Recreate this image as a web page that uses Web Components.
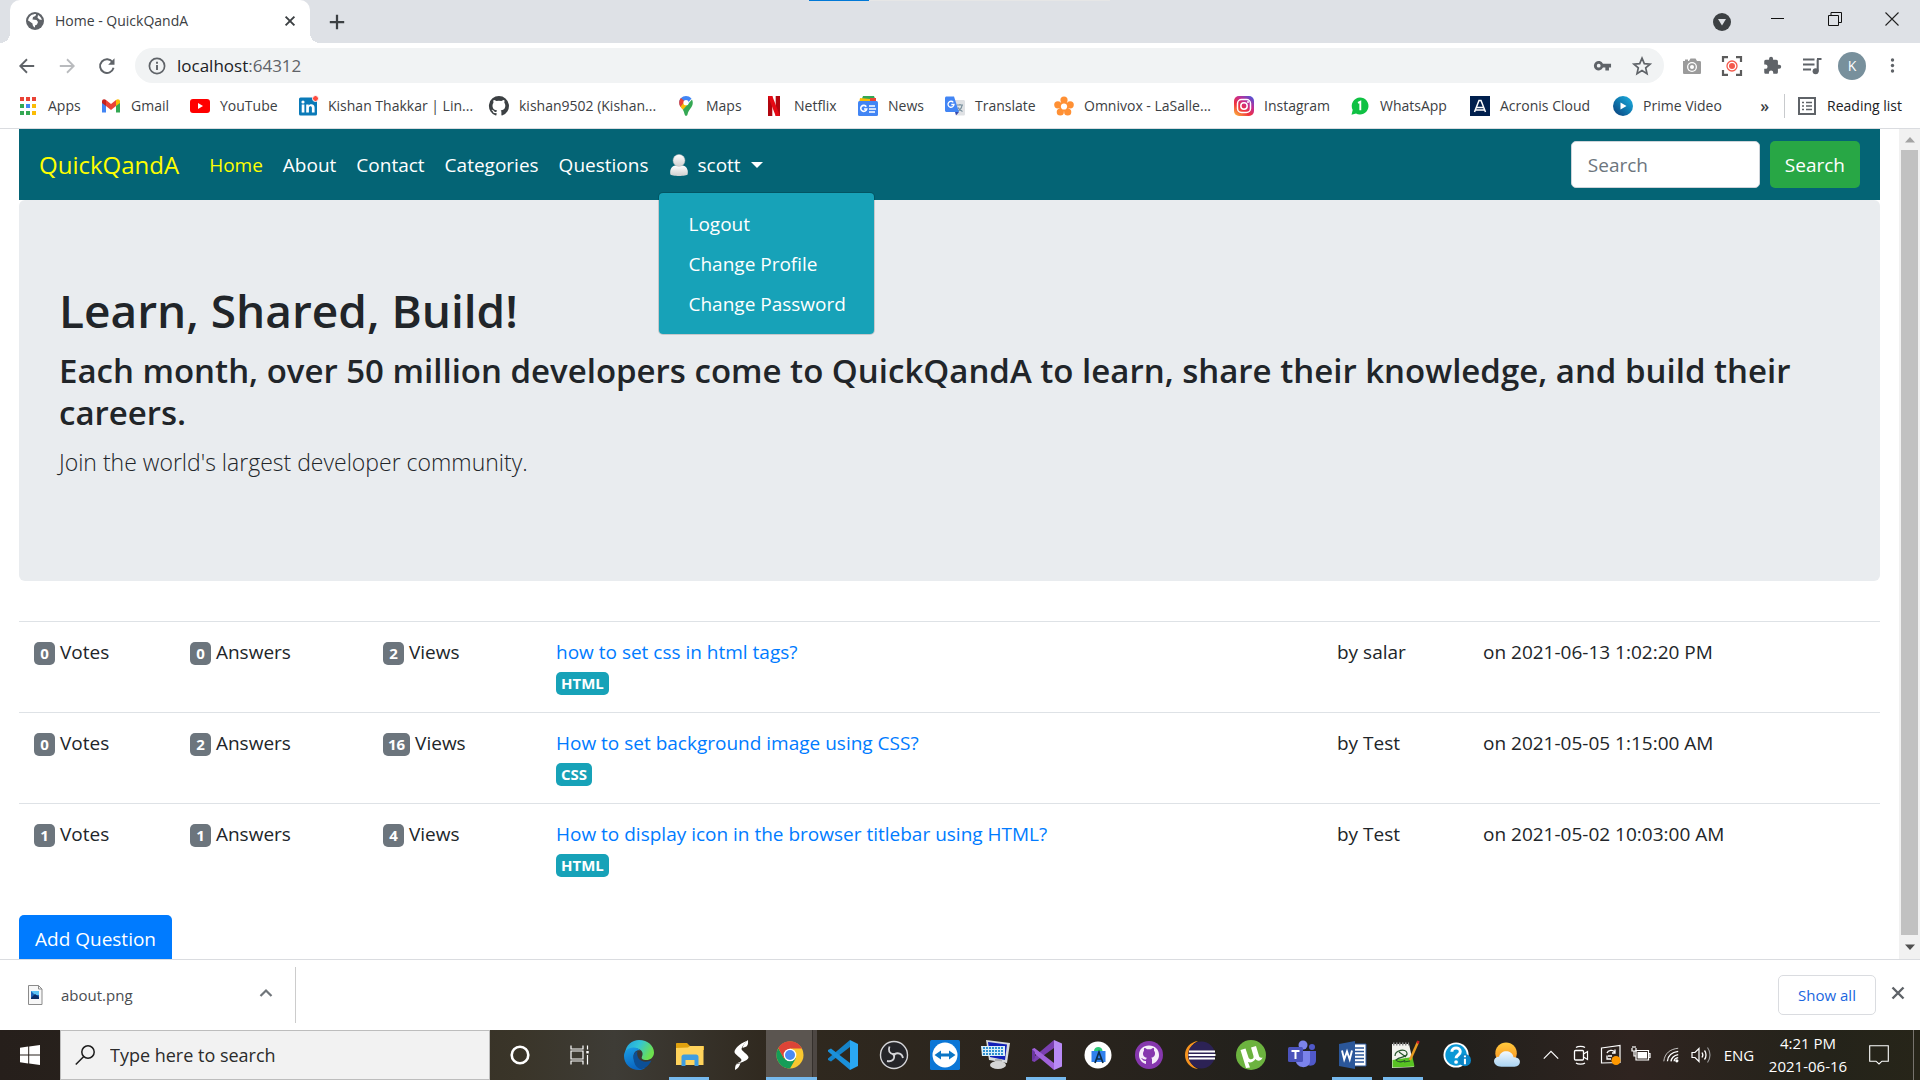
<!DOCTYPE html>
<html lang="en">
<head>
<meta charset="utf-8">
<title>Home - QuickQandA</title>
<style>
  html, body { margin: 0; height: 100%; }
  body { font-family: "Open Sans", "Noto Sans", "Liberation Sans", sans-serif; background: #fff; overflow: hidden; }
</style>
</head>
<body>
<app-window></app-window>
<script>
const BASE = `*{box-sizing:border-box} button{font:inherit;color:inherit;border:0;background:none;padding:0;margin:0;cursor:pointer} a{color:inherit;text-decoration:none}`;
function define(name, css, html, setup) {
  const t = document.createElement('template');
  t.innerHTML = `<style>${BASE}${css}</style>${html}`;
  customElements.define(name, class extends HTMLElement {
    constructor() {
      super();
      this.attachShadow({ mode: 'open' }).append(t.content.cloneNode(true));
    }
    connectedCallback() { if (setup) setup(this, this.shadowRoot); }
  });
}

/* name: [viewBox size, markup] */
const ICONS = {
  globe: [20, `<circle cx="10" cy="10" r="9" fill="#5f6368"/><path d="M3 9.5C4 5 7 3 11 3c0 2-1 2.500-3 3l-.5 2.500 4 .5 1.500 2-1 2.500-2 1v2c-1.500-.5-2.500-2-2.500-4L4 10zM13 4c2 1 3.500 3 3.800 5l-2.300-.5-2-1.800z" fill="#fff"/>`],
  x: [20, `<path d="M4.500 4.500l11 11M15.500 4.500l-11 11" stroke="currentColor" stroke-width="2.400" fill="none"/>`],
  plus: [20, `<path d="M10 2v16M2 10h16" stroke="currentColor" stroke-width="2.500" fill="none"/>`],
  back: [20, `<path d="M18 10H3M10 2.500L2.500 10l7.500 7.500" stroke="currentColor" stroke-width="2" fill="none"/>`],
  fwd: [20, `<path d="M2 10h15M10 2.500l7.500 7.500-7.500 7.500" stroke="currentColor" stroke-width="2" fill="none"/>`],
  reload: [20, `<path d="M16.300 6A7.600 7.600 0 1 0 17.300 12" stroke="currentColor" stroke-width="2.100" fill="none"/><path d="M18.300 1.500v7h-7z" fill="currentColor"/>`],
  info: [20, `<circle cx="10" cy="10" r="7.600" fill="none" stroke="currentColor" stroke-width="1.700"/><path d="M10 9v5M10 5.800v1.900" stroke="currentColor" stroke-width="1.900"/>`],
  key: [20, `<path fill-rule="evenodd" d="M10.500 8.200A5 5 0 1 0 10.500 12.200H13v3h3.800v-3H19v-4zM6 8.200a2 2 0 1 1 0 4 2 2 0 0 1 0-4z" fill="currentColor"/>`],
  star: [20, `<path d="M10 2.200l2.300 5.400 5.800.5-4.400 3.800 1.300 5.700L10 14.500l-5 3.100 1.300-5.700L1.900 8.100l5.800-.5z" stroke="currentColor" stroke-width="1.700" fill="none" stroke-linejoin="miter"/>`],
  camera: [20, `<path d="M1 5h2V3.500h3V5h1l1.500-2.500h5L15 5h2.500c1 0 1.500.5 1.500 1.500v10c0 1-.5 1.500-1.500 1.500h-15C1.500 18 1 17.500 1 16.500z" fill="#9b9b9b"/><circle cx="10" cy="11" r="5" fill="#fff"/><circle cx="10" cy="11" r="3.700" fill="#9b9b9b"/><circle cx="10" cy="11" r="2" fill="#fff"/>`],
  record: [20, `<path d="M1 6V1.200h5M14 1.200h5V6M19 14v4.800h-5M6 18.800H1V14" fill="none" stroke="#5c5c5c" stroke-width="2.200"/><circle cx="10" cy="10" r="5" fill="none" stroke="#f4594b" stroke-width="1.300"/><circle cx="10" cy="10" r="3" fill="#f4594b"/>`],
  puzzle: [20, `<path d="M17 9.200h-1.300V5.700c0-.9-.7-1.700-1.700-1.700h-3.400V2.900a2.100 2.100 0 0 0-4.200 0V4H3C2 4 1.300 4.800 1.300 5.700v3.200h1.200a2.300 2.300 0 0 1 0 4.600H1.300V17c0 .9.700 1.700 1.700 1.700h3.200v-1.200a2.300 2.300 0 0 1 4.600 0v1.200H14c.9 0 1.700-.8 1.700-1.700v-3.500H17a2.150 2.150 0 0 0 0-4.300z" fill="currentColor"/>`],
  media: [20, `<path d="M1 3.500h11.500M1 8.500h11.500M1 13.500h8M15.700 3.500v12M15 3h4.500" stroke="currentColor" stroke-width="2.100"/><circle cx="13.600" cy="15.200" r="3" fill="currentColor"/>`],
  dots: [20, `<g fill="currentColor"><circle cx="10" cy="3.500" r="2"/><circle cx="10" cy="10" r="2"/><circle cx="10" cy="16.500" r="2"/></g>`],
  dropdot: [20, `<circle cx="10" cy="10" r="9" fill="#3c4043"/><path d="M6 7h8l-4 6.500z" fill="#dee1e6"/>`],
  min: [14, `<path d="M0 6.500h13" stroke="#111" stroke-width="1"/>`],
  max: [14, `<path d="M.5 3.500h10v10H.5zM3 3V.5h10.500v10H11" stroke="#111" fill="none"/>`],
  close: [14, `<path d="M.5.5l13 13M13.500.5l-13 13" stroke="#222" stroke-width="1.100"/>`],
  apps: [20, `<g><path d="M2 1h4v4H2zM8 1h4v4H8zM14 1h4v4h-4z" fill="#ea4335"/><path d="M2 8h4v4H2zM2 15h4v4H2z" fill="#34a853"/><path d="M8 8h4v4H8z" fill="#4285f4"/><path d="M8 15h4v4H8z" fill="#34a853"/><path d="M14 8h4v4h-4zM14 15h4v4h-4z" fill="#fbbc05"/></g>`],
  gmail: [20, `<path d="M1 5v11.500h4V9z" fill="#4285f4"/><path d="M19 5v11.500h-4V9z" fill="#34a853"/><path d="M1 5.500C1 3 3.500 2.500 5 4v6L1 7z" fill="#c5221f"/><path d="M19 5.500C19 3 16.500 2.500 15 4v6l4-3z" fill="#fbbc04"/><path d="M5 4l5 4 5-4v6l-5 4-5-4z" fill="#ea4335"/>`],
  youtube: [20, `<rect y="3" width="20" height="14" rx="3" fill="#f00"/><path d="M8 7l5 3-5 3z" fill="#fff"/>`],
  linkedin: [20, `<rect x="1" y="1.500" width="18" height="18" rx="1.500" fill="#0a7ab8"/><circle cx="5" cy="6" r="1.600" fill="#fff"/><path d="M3.700 8.500h2.700v8H3.700zM8.200 8.500h2.500v1.200c1-2 5.900-2.200 5.900 2v4.800h-2.700v-4.300c0-2.600-3-2.300-3 0v4.300H8.200z" fill="#fff"/><circle cx="17.500" cy="2.500" r="3" fill="#ff4a3d" stroke="#fff"/>`],
  github: [20, `<path d="M10 0a10 10 0 0 0-3.200 19.500c.5.100.7-.2.700-.5v-1.900c-2.800.6-3.400-1.200-3.400-1.200-.4-1.100-1.100-1.500-1.100-1.500-.9-.6.100-.6.100-.6 1 .1 1.500 1 1.500 1 .9 1.500 2.400 1.100 2.900.9.100-.7.400-1.100.6-1.400-2.200-.2-4.600-1.100-4.600-4.900 0-1.100.4-2 1-2.700-.1-.2-.4-1.300.1-2.600 0 0 .9-.3 2.800 1a9.400 9.400 0 0 1 5 0c1.900-1.300 2.800-1 2.800-1 .5 1.300.2 2.400.1 2.600.6.700 1 1.600 1 2.700 0 3.800-2.400 4.700-4.600 4.900.4.300.7.900.7 1.900V19c0 .3.200.6.700.5A10 10 0 0 0 10 0z" fill="currentColor"/>`],
  maps: [20, `<path d="M10 0C6 0 3.200 3 3.200 6.500c0 3 1.800 4.500 3.500 6.800L15.500 2.500C14 .8 12 0 10 0z" fill="#4285f4"/><path d="M3.200 6.500c0-2 .8-3.300 1.700-4.500l4 3.500-4.300 5.500c-.9-1.300-1.400-2.700-1.400-4.500z" fill="#ea4335"/><path d="M4.500 10.800l4.200-5.200 4 2.400-5.600 6c-1-1.200-2-2.100-2.600-3.200z" fill="#fbbc04"/><path d="M16 3.500c1 2 1.300 4.800-.5 7.500-2 3-3.500 4.500-4 7.500-.2 1.800-2.500 2-3-.500-.3-1.500-.9-3-1.600-4.200z" fill="#34a853"/><circle cx="10" cy="6.700" r="2.600" fill="#fff"/>`],
  netflix: [20, `<path d="M4 0h4.300v20H4zM11.700 0H16v20h-4.300z" fill="#b1060f"/><path d="M4 0h4.300L16 20h-4.300z" fill="#e50914"/>`],
  news: [20, `<path d="M5 0h11l2 5H3z" fill="#34a853"/><path d="M2 2l10 1v4H1z" fill="#fbbc04"/><path d="M12 2h6v4h-6z" fill="#ea4335"/><rect y="5" width="20" height="15" rx="1.500" fill="#4285f4"/><path d="M8.300 10.800A3 3 0 1 0 8.700 13H6M11 10h6M11 13h7M11 16h6" stroke="#fff" stroke-width="1.600" fill="none"/>`],
  translate: [20, `<path d="M8 4h10.500c.8 0 1.500.6 1.500 1.500V18c0 1-.7 1.500-1.500 1.500H12z" fill="#dfe1e4"/><path d="M12 9h6M15 8v1.500M17 9.500c-.5 3-2.500 5-5 6M13 11.500c1 2 2.500 3 4.500 4" stroke="#78909c" stroke-width="1.200" fill="none"/><path d="M1.500.5H9L14 16H1.500C.7 16 0 15.300 0 14.500V2C0 1.100.7.500 1.500.5z" fill="#4285f4"/><path d="M10 16h4l-3 3.500z" fill="#3949ab"/><path d="M8.300 6.300A3 3 0 1 0 9 8.500H6.300" stroke="#fff" stroke-width="1.300" fill="none"/>`],
  flower: [20, `<g fill="#ff9034"><circle cx="10" cy="4" r="3.600"/><circle cx="3.800" cy="8.800" r="3.600"/><circle cx="16.200" cy="8.800" r="3.600"/><circle cx="6.300" cy="16" r="3.600"/><circle cx="13.700" cy="16" r="3.600"/><circle cx="10" cy="10.500" r="5"/></g><circle cx="10" cy="10.500" r="3.100" fill="#fff"/>`],
  instagram: [20, `<defs><linearGradient id="ig" x1="0" y1="1" x2=".8" y2="0"><stop offset="0" stop-color="#fdc33c"/><stop offset=".4" stop-color="#f0323c"/><stop offset=".7" stop-color="#c42d92"/><stop offset="1" stop-color="#5a4fd0"/></linearGradient></defs><rect width="20" height="20" rx="5" fill="url(#ig)"/><rect x="3.500" y="3.500" width="13" height="13" rx="4" fill="none" stroke="#fff" stroke-width="1.500"/><circle cx="10" cy="10" r="3.200" fill="none" stroke="#fff" stroke-width="1.500"/><circle cx="14" cy="6" r="1" fill="#fff"/>`],
  whatsapp: [20, `<path d="M10 1.500a8.500 8.500 0 1 1-4 16L1.500 18.700 2.700 14A8.500 8.500 0 0 1 10 1.500z" fill="#0fc143"/><path d="M8 6.800l2.300-1v8.500" fill="none" stroke="#fff" stroke-width="1.900"/>`],
  acronis: [20, `<path d="M0 0h20v20H0z" fill="#001f4d"/><path d="M4.500 16L9 4.500h2L15.500 16M6.500 11.500h7M5.500 14h9" fill="none" stroke="#fff" stroke-width="1.500"/>`],
  prime: [20, `<defs><linearGradient id="pv" x1="0" y1="1" x2="1" y2="0"><stop offset="0" stop-color="#0b3c78"/><stop offset=".5" stop-color="#0f79af"/><stop offset="1" stop-color="#1fb3e4"/></linearGradient></defs><circle cx="10" cy="10" r="10" fill="url(#pv)"/><path d="M7.500 6.500l6 3.500-6 3.500z" fill="#fff"/>`],
  list: [20, `<rect x="2" y="2" width="16" height="16" fill="none" stroke="#5f6368" stroke-width="2"/><path d="M5 6.500h2M9 6.500h6M5 10h2M9 10h6M5 13.500h2M9 13.500h6" stroke="#5f6368" stroke-width="1.600"/>`],
  user: [24, `<defs><linearGradient id="ug" x1="0" y1="0" x2="0" y2="1"><stop offset="0" stop-color="#fff"/><stop offset="1" stop-color="#cfcfcf"/></linearGradient></defs><path d="M2.500 22c-.8-6 2-9 5.500-9.500h8c3.500.5 6.300 3.500 5.500 9.500-1 2.500-18 2.500-19 0z" fill="url(#ug)"/><circle cx="12" cy="7" r="6.500" fill="url(#ug)" stroke="#bbb" stroke-width=".5"/>`],
  image: [20, `<path d="M3.500.500h10l3.500 3.500v15.500H3.500z" fill="#f7f7f7" stroke="#8b8b8b"/><path d="M13.500.500v3.500H17" fill="none" stroke="#8b8b8b"/><path d="M6 6h8v8H6z" fill="#1b62b8"/><path d="M6 6h8v4l-4 0z" fill="#5cc3f5"/><path d="M6 13l4-4 4 3v2H6z" fill="#0b2c66"/>`],
  up: [20, `<path d="M4.500 13L10 7.500l5.500 5.500" stroke="currentColor" stroke-width="2.200" fill="none"/>`],
  win: [20, `<path d="M0 2.800l8.200-1.200v8H0zM9.200 1.500L20 0v9.600H9.200zM0 10.500h8.200v8L0 17.300zM9.200 10.500H20V20L9.200 18.500z" fill="#fff"/>`],
  search: [20, `<circle cx="13" cy="7" r="6.200" fill="none" stroke="#1c1c1c" stroke-width="1.500"/><path d="M8.800 11.500L.8 19.500" stroke="#1c1c1c" stroke-width="1.500"/>`],
  cortana: [20, `<circle cx="10" cy="10" r="8.300" fill="none" stroke="#fff" stroke-width="2.600"/>`],
  taskview: [20, `<path d="M1 .5V4h12V.5M1 19.500V16h12v3.500M1 6h12v8H1zM17.500 .5v4M17.500 10v9.500" stroke="#fff" stroke-width="1.200" fill="none"/><path d="M16.300 6h2.400v2.400h-2.400z" fill="#fff"/>`],
  edge: [30, `<defs><linearGradient id="e1" x1="0" y1="0" x2="1" y2=".4"><stop offset="0" stop-color="#1f9de0"/><stop offset=".5" stop-color="#33c5d6"/><stop offset="1" stop-color="#6de04e"/></linearGradient><linearGradient id="e2" x1="0" y1="0" x2=".3" y2="1"><stop offset="0" stop-color="#1b9fe6"/><stop offset="1" stop-color="#0a66c2"/></linearGradient></defs><path d="M1 13C2 5 8 0 15 0c9 0 15 6 15 12.500 0 5-4 7.500-7.500 7.500-4 0-5.500-1.500-4.500-3.500 2-4-1-8-6-8S2 11 1 13z" fill="url(#e1)"/><path d="M0 16C0 11 4 7.500 9.500 7.500c3 0 5.500 1 7 3-4-1-7 2-7 6C9.500 23 15 28 21 28c-2 1.500-4 2-6 2C6.500 30 0 24 0 16z" fill="url(#e2)"/><path d="M9.500 17c0-3 1.500-5 4-6-2 8 5 13 14 9.500-3 6-7 8.500-11.500 8.500-4-1.500-6.500-6-6.500-12z" fill="#0c4f96"/>`],
  folder: [30, `<path d="M1 4c0-.6.400-1 1-1h10l3 3h13c.6 0 1 .4 1 1v3H1z" fill="#e0a10e"/><path d="M1 8l12-.5L15 6h13.500v19H1z" fill="#ffd35c"/><path d="M6.500 26V17c0-1.500 1-2.500 2.500-2.500h12c1.500 0 2.500 1 2.500 2.500v9h-4v-6h-9v6z" fill="#3f9de0"/>`],
  bolt: [30, `<path d="M20.500 1C13 4 8.500 9 8.500 12c0 2.500 7 6 7 8 0 1.500-3 3-6 3.500 7-.5 13-4 13-6 0-3-7-6.500-7-8.500 0-1.500 2-4 5-8z" fill="#fff"/><path d="M10 24.500c-1 2-1 4-1 5.500 3-1.500 4.500-3.500 5.500-7zM20.500 6.500c2-2 1.500-4 1.500-6.500-3 2-4.500 4.500-5.500 8z" fill="#fff"/>`],
  chrome: [30, `<circle cx="15" cy="15" r="13.500" fill="#f9c72f"/><path d="M3.300 8.200A13.500 13.500 0 0 0 15 28.500l5.800-10L15 15l-5.800 3.500z" fill="#159d58"/><path d="M15 8.500h12a13.500 13.500 0 0 0-23.700-.5l5.500 10.500z" fill="#dc4437"/><circle cx="15" cy="15" r="6.300" fill="#fff"/><circle cx="15" cy="15" r="5" fill="#4a8af4"/>`],
  vscode: [30, `<path d="M0 20l3 1.500L22 7V0L0 18.500z" fill="#1583c9"/><path d="M0 10l3-1.500L22 23v7L0 11.500z" fill="#1b90da"/><path d="M22 0l8 4v22l-8 4z" fill="#2aa8f4"/>`],
  obs: [30, `<circle cx="15" cy="15" r="13.500" fill="#252529" stroke="#d5d5d8" stroke-width="1.400"/><g fill="none" stroke="#d5d5d8" stroke-width="1.800"><path d="M15 14.500c-5-1-6-4-4.500-8M15 14.500c4-2.500 8-1 9 3.500M15 14.500c1 5-2 7.500-7 6.500"/></g><circle cx="15" cy="14.500" r="1.500" fill="#d5d5d8"/>`],
  teamviewer: [30, `<rect width="30" height="30" rx="1.500" fill="#0b76d6"/><circle cx="15" cy="15" r="12.500" fill="#fff"/><path d="M4.500 15l6.500-4.500v3h8v-3l6.500 4.500-6.500 4.500v-3h-8v3z" fill="#0b76c6"/>`],
  remote: [30, `<path d="M5 0l24 3-3 20L8 20z" fill="#d8dadd"/><path d="M7 2l19 2.500L24 20 9 17z" fill="#1220b8"/><path d="M0 6h24v10H1z" fill="#d9eef8"/><path d="M2 8h20M2 11h20M2 14h20" stroke="#3090d0" stroke-width="1.800" stroke-dasharray="2 1"/><path d="M14 19h7v5h-7z" fill="#b0b0b0"/><ellipse cx="17" cy="25" rx="8" ry="4" fill="#d5d5d5"/>`],
  vs: [30, `<path d="M0 21l2.500 1L22 8V0L0 18.500z" fill="#7a3fb0"/><path d="M0 9l2.500-1L22 23v7L0 11.500z" fill="#a163da"/><path d="M0 9l3 3v6l-3 3z" fill="#6a35a0"/><path d="M22 0l8 3.500v23L22 30z" fill="#b98af5"/>`],
  studio: [30, `<circle cx="15" cy="15" r="13.500" fill="#fff"/><path d="M8.500 11h14v11h-14z" fill="#2f80ed"/><path d="M11 11c0-5.500 8.500-5.500 8.500 0z" fill="#2ccb78"/><path d="M12 23l4-11 4 11M14 19h5" stroke="#0c2d4a" stroke-width="1.700" fill="none"/>`],
  ghdesk: [30, `<circle cx="15" cy="15" r="14" fill="#8637ae"/><path d="M15 5.500c-6 0-10 4-10 9.500 0 4.500 3 8 7 9v-3c-3 .5-4-2-5-3 2 0 2 2 5 1.500l.8-1.700C9.500 17 9 15 9 13.500c0-1.200.4-2 1-2.700-.2-1-.1-2 .2-2.800 1 0 2 .6 2.800 1.200h4c.8-.6 1.800-1.200 2.800-1.200.3.800.4 1.800.2 2.800.6.700 1 1.500 1 2.700 0 1.500-.5 3.500-3.800 4.300.5.500.8 1 .8 2V24c4-1 7-4.500 7-9 0-5.500-4-9.500-10-9.500z" fill="#f5edf9"/>`],
  eclipse: [30, `<path d="M13 1C5 2 0 8 0 15s5 13 13 14C7 26 4 21 4 15S7 4 13 1z" fill="#f7941e"/><circle cx="16.500" cy="15" r="13.500" fill="#2c2255"/><path d="M4 11.500h26M3.500 15h27M4 18.500h26" stroke="#fff" stroke-width="2"/>`],
  utorrent: [30, `<circle cx="15" cy="15" r="15" fill="#6cb33f"/><path d="M4.500 10l5-1.500 3 9c1 3 6 2 5-1.500L15 7.500l5-1.500 3 10c.5 1.500 1.500 2 3.500 1.500-.5 3-5 4.500-7 1.500-2 3-5 4-7.500 3l2 5.500-4 .5z" fill="#fff"/>`],
  teams: [30, `<circle cx="16" cy="5" r="4.500" fill="#7b83eb"/><circle cx="25" cy="7" r="3" fill="#5059c9"/><path d="M18 11h11v9c0 7-8 7-11 3z" fill="#5059c9"/><path d="M9 11h14v10c0 8-12 8-14 1z" fill="#7b83eb"/><rect x="1" y="7" width="15" height="15" rx="1.500" fill="#4b53bc"/><path d="M4.500 11h8M8.500 11v8" stroke="#fff" stroke-width="2"/>`],
  word: [30, `<path d="M14 4h14v22H14z" fill="#fff" stroke="#2b579a"/><path d="M17 8h9M17 11.500h9M17 15h9M17 18.500h9M17 22h9" stroke="#2b579a" stroke-width="1.600"/><path d="M1 4l16-3v28L1 26z" fill="#2b579a"/><path d="M4 10.500l2.200 9L9 11.500l2.700 8 2.300-9" stroke="#fff" stroke-width="1.900" fill="none"/>`],
  npp: [30, `<path d="M3 4h17l5 23-22 1z" fill="#f3f3ee"/><path d="M3.500 20l20-3 2 9.500-22 1z" fill="#58c322"/><path d="M4 4h16" stroke="#888" stroke-width="3" stroke-dasharray="1.500 1.500"/><path d="M6 16c0-6 11-8 12-3s-7 3-11 7c2 3 8 2 9 0M10 12l7 5M15 22l6-1" stroke="#26562a" stroke-width="1.200" fill="none"/><path d="M29 2l-8 18" stroke="#e69a21" stroke-width="2.500"/><path d="M29.500 1l-1 2.500" stroke="#c22" stroke-width="2.500"/>`],
  help: [30, `<circle cx="14" cy="15" r="13.500" fill="#fff"/><circle cx="14" cy="15" r="11.500" fill="#0a98d6"/><path d="M9.500 11.500c0-5.500 9-5.500 9 0 0 3.500-4.500 3.500-4.500 7" stroke="#fff" stroke-width="3.200" fill="none"/><circle cx="14" cy="22.500" r="2" fill="#fff"/><circle cx="23.500" cy="20.500" r="6.500" fill="#0a84c6"/><path d="M23.500 19v6M23.500 15.500v2" stroke="#fff" stroke-width="2.200"/>`],
  weather: [30, `<defs><linearGradient id="sun" x1="0" y1="0" x2="0" y2="1"><stop offset="0" stop-color="#ffc93d"/><stop offset="1" stop-color="#f98d1d"/></linearGradient><linearGradient id="cl" x1="0" y1="0" x2="0" y2="1"><stop offset="0" stop-color="#f2f8fd"/><stop offset="1" stop-color="#a9d3f2"/></linearGradient></defs><circle cx="14" cy="13" r="11.500" fill="url(#sun)"/><path d="M9 27.500c-10 0-10-10.500-2.500-10.500 1.500-8 14-8 15.500.5 9-1 9 10 1 10z" fill="url(#cl)"/>`],
  chev: [20, `<path d="M2 14l8-8 8 8" stroke="#fff" stroke-width="1.300" fill="none"/>`],
  cam: [20, `<rect x="3.500" y="5.500" width="9" height="9.500" rx="1" fill="none" stroke="#fff" stroke-width="1.300"/><path d="M12.500 9l4-2.500v8l-4-2.500M5 2.500c2-1.500 7-1.500 9 0M5 18c2 1.500 7 1.500 9 0" fill="none" stroke="#fff" stroke-width="1.200"/>`],
  update: [20, `<path d="M.5 3L19 .5v17L.500 18z" fill="none" stroke="#fff" stroke-width="1.200"/><path d="M6 8c1-3 6-3.500 7.500-1M14 4.500V8h-3M7 11h4M10 14H6v-3.500" fill="none" stroke="#fff" stroke-width="1.300"/><circle cx="15" cy="15.500" r="4.500" fill="#ff9800"/>`],
  battery: [20, `<path d="M5 5.500h12.500v9.500H5zM17.500 8.500H19v4h-1.500" fill="none" stroke="#fff" stroke-width="1.200"/><path d="M6.500 7h9.500v6.500H6.500z" fill="#fff"/><path d="M1 3v3h4V3M2 1v2M4 1v2M3 6v5h2" stroke="#fff" stroke-width="1.200" fill="none"/>`],
  wifi: [20, `<g fill="none" stroke="#fff"><path d="M2 17C3 8 9 3.500 18 2.500" stroke-width="1" opacity=".8"/><path d="M6 17c.5-6 5-10 12-11M10 17c.5-4 3-6.500 8-7.500" stroke-width="1.500"/><path d="M13.500 17c0-2 1.500-3.500 4.500-4" stroke-width="1.500"/></g><circle cx="16.500" cy="16.500" r="1.800" fill="#fff"/>`],
  speaker: [20, `<path d="M1 7.500h3l4-4v13l-4-4H1z" fill="none" stroke="#fff" stroke-width="1.200"/><path d="M11 7.500c1 1.500 1 3.500 0 5M13.500 5.500c2 2.500 2 6.500 0 9" fill="none" stroke="#fff" stroke-width="1.300"/><path d="M16.500 2.500c3.300 4.500 3.300 10.500 0 15" fill="none" stroke="#999" stroke-width="1.200"/>`],
  note: [20, `<path d="M.700.700h18.600v15.500H13L10 19l-3-2.800H.700z" fill="none" stroke="#fff" stroke-width="1.100"/>`],
  tri: [10, `<path d="M0 7.500L5 2l5 5.500z" fill="currentColor"/>`],
};
customElements.define('ui-icon', class extends HTMLElement {
  constructor() { super(); this.attachShadow({ mode: 'open' }); }
  connectedCallback() {
    const [box, body] = ICONS[this.getAttribute('name')];
    const size = this.getAttribute('size') || 20;
    this.shadowRoot.innerHTML = `<style>:host{display:inline-flex;flex:none}svg{display:block;overflow:visible}</style><svg width="${size}" height="${size}" viewBox="0 0 ${box} ${box}" aria-hidden="true">${body}</svg>`;
  }
});

define('tab-strip', `
  :host{display:flex;position:relative;height:43px;flex:none;background:#dee1e6;color:#3c4043;font-size:14px;padding-left:10px}
  .tab{position:relative;display:flex;align-items:center;width:300px;padding:0 12px 2px 15px;background:#fff;border-radius:10px 10px 0 0}
  .tab::before,.tab::after{content:"";position:absolute;bottom:0;width:10px;height:10px}
  .tab::before{left:-10px;background:radial-gradient(circle at 0 0,#dee1e6 10px,#fff 10px)}
  .tab::after{right:-10px;background:radial-gradient(circle at 100% 0,#dee1e6 10px,#fff 10px)}
  .tab span{flex:1;margin-left:10px}
  button{display:inline-flex;align-items:center;justify-content:center}
  .new{width:36px;margin-left:9px}
  .controls{display:flex;margin-left:auto;height:38px}
  .controls button{width:57px}
  .controls .small{width:54px;padding-top:5px}
  .load{position:absolute;left:809px;top:0;width:301px;height:1px;background:linear-gradient(90deg,#0078d7 20%,#e6e6e6 20%)}`,
  `<div class="tab"><ui-icon name="globe" size="20"></ui-icon><span>Home - QuickQandA</span><button aria-label="Close tab"><ui-icon name="x" size="16"></ui-icon></button></div>
  <button class="new" aria-label="New tab"><ui-icon name="plus" size="18"></ui-icon></button>
  <div class="controls"><button class="small" aria-label="Search tabs"><ui-icon name="dropdot" size="20"></ui-icon></button>
  <button aria-label="Minimize"><ui-icon name="min" size="14"></ui-icon></button><button aria-label="Restore"><ui-icon name="max" size="14"></ui-icon></button><button aria-label="Close"><ui-icon name="close" size="14"></ui-icon></button></div><div class="load"></div>`);

define('tool-bar', `
  :host{display:flex;align-items:center;height:45px;flex:none;color:#5f6368;padding:0 8px 0 7px}
  button{display:inline-flex;align-items:center;justify-content:center;width:40px;height:36px}
  .off{color:#b9bbbe}
  .omni{flex:1;display:flex;align-items:center;height:35px;border-radius:18px;background:#f1f3f4;margin:0 8px;padding:0 2px 0 12px;font-size:17px}
  .url{flex:1;margin-left:10px}.url b{font-weight:400;color:#202124}
  .avatar{width:28px;height:28px;margin:0 6px;border-radius:50%;background:#78909c;color:#fff;font-size:14px}`,
  `<button aria-label="Back"><ui-icon name="back" size="18"></ui-icon></button><button class="off" aria-label="Forward"><ui-icon name="fwd" size="18"></ui-icon></button><button aria-label="Reload"><ui-icon name="reload" size="18"></ui-icon></button>
  <div class="omni"><ui-icon name="info" size="20"></ui-icon><span class="url"><b>localhost</b>:64312</span><button aria-label="Passwords"><ui-icon name="key" size="19"></ui-icon></button><button aria-label="Bookmark"><ui-icon name="star" size="20"></ui-icon></button></div>
  <button aria-label="Capture"><ui-icon name="camera" size="20"></ui-icon></button><button aria-label="Record"><ui-icon name="record" size="20"></ui-icon></button><button aria-label="Extensions"><ui-icon name="puzzle" size="19"></ui-icon></button><button aria-label="Media"><ui-icon name="media" size="20"></ui-icon></button><button class="avatar">K</button><button aria-label="Menu"><ui-icon name="dots" size="17"></ui-icon></button>`);

define('bookmark-item', `
  :host{display:block} a{display:flex;align-items:center;gap:10px;white-space:nowrap}`,
  `<a href="#"><slot></slot></a>`,
  (el, root) => {
    const i = document.createElement('ui-icon');
    i.setAttribute('name', el.getAttribute('icon')); i.setAttribute('size', '20');
    root.querySelector('a').prepend(i);
  });
define('bookmark-bar', `
  :host{display:flex;align-items:center;height:41px;flex:none;padding:0 18px 5px 18px;border-bottom:1px solid #dadce0;color:#3c4043;font-size:14px}
  nav{display:grid;grid-template-columns:83px 89px 108px 191px 187px 88px 94px 87px 109px 180px 116px 120px 143px auto}
  .more{margin-left:auto;margin-right:15px;font-size:16px;font-weight:600}
  .read{border-left:1px solid #c8cacd;padding-left:12px;height:24px;display:flex;align-items:center;color:#202124}`,
  `<nav><bookmark-item icon="apps">Apps</bookmark-item><bookmark-item icon="gmail">Gmail</bookmark-item><bookmark-item icon="youtube">YouTube</bookmark-item><bookmark-item icon="linkedin">Kishan Thakkar | Lin...</bookmark-item><bookmark-item icon="github">kishan9502 (Kishan...</bookmark-item><bookmark-item icon="maps">Maps</bookmark-item><bookmark-item icon="netflix">Netflix</bookmark-item><bookmark-item icon="news">News</bookmark-item><bookmark-item icon="translate">Translate</bookmark-item><bookmark-item icon="flower">Omnivox - LaSalle...</bookmark-item><bookmark-item icon="instagram">Instagram</bookmark-item><bookmark-item icon="whatsapp">WhatsApp</bookmark-item><bookmark-item icon="acronis">Acronis Cloud</bookmark-item><bookmark-item icon="prime">Prime Video</bookmark-item></nav>
  <button class="more">»</button><div class="read"><bookmark-item icon="list">Reading list</bookmark-item></div>`);

define('user-menu', `
  :host{display:block;position:relative}
  .toggle{display:flex;align-items:center;padding:0 10px}
  .toggle span{margin:0 10px 0 7px}
  .caret{border:6px solid transparent;border-top-color:#fff;border-bottom:0}
  ul{position:absolute;left:0;top:41px;margin:0;padding:11px 0 10px;list-style:none;width:217px;background:#17a2b8;border:1px solid rgba(0,0,0,.15);border-radius:5px;background-clip:padding-box;z-index:2}
  li a{display:block;height:40px;line-height:40px;padding:0 29px;white-space:nowrap}`,
  `<button class="toggle" aria-expanded="true"><ui-icon name="user" size="22"></ui-icon><span><slot></slot></span><i class="caret"></i></button>
  <ul><li><a href="#">Logout</a></li><li><a href="#">Change Profile</a></li><li><a href="#">Change Password</a></li></ul>`);
define('site-navbar', `
  :host{display:flex;align-items:center;height:71px;padding:0 20px;background:#046475;color:#fff;font-size:19px}
  .brand{color:#ff0;font-size:24px;margin-right:20px}
  nav{display:flex;align-items:center} nav>a{padding:0 10px} .on{color:#ff0}
  form{display:flex;gap:10px;margin-left:auto}
  input{width:189px;height:47px;font:inherit;border:1px solid #ced4da;border-radius:5px;padding:0 16px;background:#fff}
  input::placeholder{color:#6c757d;opacity:1}
  form button{height:47px;padding:0 15px;border-radius:5px;background:#28a745}
  nav user-menu{height:28px;line-height:28px}`,
  `<a class="brand" href="#">QuickQandA</a><nav><a class="on" href="#">Home</a><a href="#">About</a><a href="#">Contact</a><a href="#">Categories</a><a href="#">Questions</a><user-menu>scott</user-menu></nav>
  <form onsubmit="return false"><input type="text" placeholder="Search" aria-label="Search"><button>Search</button></form>`);

define('hero-banner', `
  :host{display:block;padding:80px 40px;background:#e9ecef;border-radius:6px;margin-bottom:40px;color:#212529}
  h1,h2{font-weight:600;margin:0 0 10px} h1{font-size:46px;line-height:60px} h2{font-size:33px;line-height:42px}
  p{margin:0 0 20px;font-size:23px;line-height:37px;font-weight:300}`,
  `<h1>Learn, Shared, Build!</h1><h2>Each month, over 50 million developers come to QuickQandA to learn, share their knowledge, and build their careers.</h2><p>Join the world's largest developer community.</p>`);

define('count-badge', `
  :host{display:inline-block;background:#6c757d;color:#fff;font-weight:700;font-size:15px;line-height:15px;padding:4px 5px;border-radius:5px;vertical-align:baseline;text-align:center;min-width:21px}
  :host([kind=tag]){background:#17a2b8}`, `<slot></slot>`);
define('question-list', `
  :host{display:block;color:#212529;font-size:19px;line-height:30px;margin-bottom:20px}
  table{width:100%;table-layout:fixed;border-collapse:collapse}
  td{border-top:1px solid #dee2e6;padding:15px;height:91px;vertical-align:top;white-space:nowrap}
  td a{color:#007bff} .n{width:156px}.a{width:193px}.v{width:173px}.b{width:146px}.d{width:412px}`,
  `<table><colgroup><col class="n"><col class="a"><col class="v"><col><col class="b"><col class="d"></colgroup><tbody></tbody></table>`,
  (el, root) => {
    root.querySelector('tbody').innerHTML = [
      [0, 0, 2, 'how to set css in html tags?', 'HTML', 'salar', '2021-06-13 1:02:20 PM'],
      [0, 2, 16, 'How to set background image using CSS?', 'CSS', 'Test', '2021-05-05 1:15:00 AM'],
      [1, 1, 4, 'How to display icon in the browser titlebar using HTML?', 'HTML', 'Test', '2021-05-02 10:03:00 AM'],
    ].map(([n, a, v, q, t, by, on]) => `<tr><td><count-badge>${n}</count-badge> Votes</td><td><count-badge>${a}</count-badge> Answers</td><td><count-badge>${v}</count-badge> Views</td><td><a href="#">${q}</a><br><count-badge kind="tag">${t}</count-badge></td><td>by ${by}</td><td>on ${on}</td></tr>`).join('');
  });

define('page-view', `
  :host{display:flex;flex:1;min-height:0}
  main{flex:1;min-width:0;overflow:hidden;padding:0 19px}
  .add{height:48px;padding:0 16px;border-radius:5px;background:#007bff;color:#fff;font-size:19px}
  .bar{width:21px;display:flex;flex-direction:column;align-items:center;background:#f1f1f1;color:#505050}
  .thumb{flex:1;width:17px;background:#c1c1c1}
  .bar span{height:21px;display:flex;align-items:center} .bar .top{color:#a3a3a3} .bar .bot{height:24px;rotate:180deg}`,
  `<main><site-navbar></site-navbar><hero-banner></hero-banner><question-list></question-list><button class="add">Add Question</button></main>
  <div class="bar"><span class="top"><ui-icon name="tri" size="10"></ui-icon></span><div class="thumb"></div><span class="bot"><ui-icon name="tri" size="10"></ui-icon></span></div>`);

define('download-shelf', `
  :host{display:flex;align-items:center;height:71px;flex:none;border-top:1px solid #dadce0;background:#fff;color:#4a4d51;font-size:15px;padding-right:12px}
  .file{display:flex;align-items:center;width:296px;height:56px;padding:0 19px 0 25px;border-right:1px solid #ccc}
  .file span{flex:1;margin-left:16px} .up{color:#70757a}
  button{color:#5f6368}
  .all{margin-left:auto;margin-right:12px;width:98px;height:40px;border:1px solid #dadce0;border-radius:5px;color:#1a66e0;font-size:15px}`,
  `<div class="file"><ui-icon name="image" size="20"></ui-icon><span>about.png</span><button class="up" aria-label="Options"><ui-icon name="up" size="20"></ui-icon></button></div>
  <button class="all">Show all</button><button aria-label="Close"><ui-icon name="x" size="20"></ui-icon></button>`);

define('task-app', `
  :host{display:flex;width:51px;position:relative} button{flex:1;display:flex;align-items:center;justify-content:center}
  :host([run])::after{content:"";position:absolute;left:5px;right:6px;bottom:0;height:3px;background:#76b9ed}
  :host([active]){background:linear-gradient(90deg,#5b5550 46px,#35302c 46px 47px,#4d4743 47px);padding-right:4px} :host([active])::after{left:0;right:0}`,
  `<button></button>`,
  (el, root) => {
    const b = root.querySelector('button');
    b.setAttribute('aria-label', el.getAttribute('icon'));
    b.innerHTML = `<ui-icon name="${el.getAttribute('icon')}" size="30"></ui-icon>`;
  });
define('task-bar', `
  :host{display:flex;height:50px;flex:none;color:#fff;background:linear-gradient(90deg,#261f1b 0,#29231d 10%,#3a3529 27%,#3e3c36 32%,#30291f 40%,#2a241d 55%,#21201c 68%,#22201c 76%,#2f2420 85%,#24231a 95%,#272519 100%)}
  button{display:flex;align-items:center;justify-content:center}
  .start{width:60px}
  label{display:flex;align-items:center;width:430px;padding:0 15px 0 14px;background:#f2f2f2;border:1px solid #bdbdbd}
  input{flex:1;min-width:0;margin-left:15px;padding:0;border:0;background:none;font:inherit;font-size:18px;color:#2b2b2b} input::placeholder{color:#2b2b2b;opacity:1}
  .wide{width:60px} .apps{display:flex;margin-left:3px}
  .tray{display:flex;align-items:center;margin-left:auto;padding-right:6px;height:50px}
  .tray>*{height:50px}.t{width:50px}.s{width:30px}
  .lang{width:46px;font-size:15px} .clock{width:92px;flex-direction:column;font-size:15px;line-height:23px} .note{width:50px;margin-right:9px} .gap{width:4px} .edge{border-left:1px solid #77736d}`,
  `<button class="start" aria-label="Start"><ui-icon name="win" size="20"></ui-icon></button>
  <label><ui-icon name="search" size="20"></ui-icon><input type="text" placeholder="Type here to search" aria-label="Type here to search"></label>
  <button class="wide" aria-label="Cortana"><ui-icon name="cortana" size="20"></ui-icon></button><button class="wide" aria-label="Task view"><ui-icon name="taskview" size="20"></ui-icon></button>
  <div class="apps"><task-app icon="edge"></task-app><task-app icon="folder" run></task-app><task-app icon="bolt"></task-app><task-app icon="chrome" run active></task-app><task-app icon="vscode"></task-app><task-app icon="obs"></task-app><task-app icon="teamviewer"></task-app><task-app icon="remote"></task-app><task-app icon="vs" run></task-app><task-app icon="studio"></task-app><task-app icon="ghdesk"></task-app><task-app icon="eclipse"></task-app><task-app icon="utorrent"></task-app><task-app icon="teams"></task-app><task-app icon="word" run></task-app><task-app icon="npp" run></task-app></div>
  <div class="tray"><button class="t" aria-label="Help"><ui-icon name="help" size="28"></ui-icon></button><button class="t" aria-label="Weather"><ui-icon name="weather" size="28"></ui-icon></button><span class="gap"></span><button class="s" aria-label="Hidden icons"><ui-icon name="chev" size="18"></ui-icon></button><button class="s" aria-label="Meet now"><ui-icon name="cam" size="20"></ui-icon></button><button class="s" aria-label="Update"><ui-icon name="update" size="20"></ui-icon></button><button class="s" aria-label="Battery"><ui-icon name="battery" size="20"></ui-icon></button><button class="s" aria-label="Network"><ui-icon name="wifi" size="18"></ui-icon></button><button class="s" aria-label="Volume"><ui-icon name="speaker" size="20"></ui-icon></button><button class="lang">ENG</button><button class="clock"><span>4:21 PM</span><span>2021-06-16</span></button><button class="note" aria-label="Notifications"><ui-icon name="note" size="20"></ui-icon></button><span class="edge"></span></div>`);

define('app-window', `:host{display:flex;flex-direction:column;height:100vh}`,
  `<tab-strip></tab-strip><tool-bar></tool-bar><bookmark-bar></bookmark-bar><page-view></page-view><download-shelf></download-shelf><task-bar></task-bar>`);
</script>
</body>
</html>
